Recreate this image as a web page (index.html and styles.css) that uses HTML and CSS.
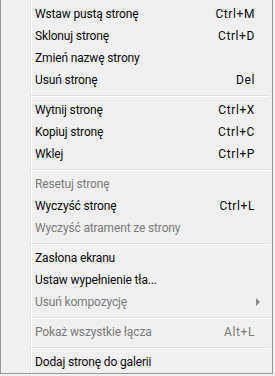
FILE: index.html
```html
<!doctype html>
<html lang="pl">
  <head>
    <meta charset="UTF-8" />
    <title>Menu strony</title>
    <link rel="stylesheet" href="styles.css">
  </head>
  <body>
    <div class="menu">
      <ul class="menu-list">
        <li class="menu-item"><span class="label">Wstaw pustą stronę</span><span class="key">Ctrl+M</span></li>
        <li class="menu-item"><span class="label">Sklonuj stronę</span><span class="key">Ctrl+D</span></li>
        <li class="menu-item"><span class="label">Zmień nazwę strony</span></li>
        <li class="menu-item"><span class="label">Usuń stronę</span><span class="key">Del</span></li>
        <li class="separator"></li>
        <li class="menu-item"><span class="label">Wytnij stronę</span><span class="key">Ctrl+X</span></li>
        <li class="menu-item"><span class="label">Kopiuj stronę</span><span class="key">Ctrl+C</span></li>
        <li class="menu-item"><span class="label">Wklej</span><span class="key">Ctrl+P</span></li>
        <li class="separator"></li>
        <li class="menu-item disabled"><span class="label">Resetuj stronę</span></li>
        <li class="menu-item"><span class="label">Wyczyść stronę</span><span class="key">Ctrl+L</span></li>
        <li class="menu-item disabled"><span class="label">Wyczyść atrament ze strony</span></li>
        <li class="separator"></li>
        <li class="menu-item"><span class="label">Zasłona ekranu</span></li>
        <li class="menu-item"><span class="label">Ustaw wypełnienie tła...</span></li>
        <li class="menu-item disabled has-sub"><span class="label">Usuń kompozycję</span><span class="arrow"></span></li>
        <li class="separator"></li>
        <li class="menu-item disabled"><span class="label">Pokaż wszystkie łącza</span><span class="key">Alt+L</span></li>
        <li class="separator"></li>
        <li class="menu-item"><span class="label">Dodaj stronę do galerii</span></li>
      </ul>
    </div>
  </body>
</html>
```

FILE: styles.css
```css
body {
  margin: 0;
  background: #efefef;
  font-family: Roboto, 'Open Sans', sans-serif;
  font-size: 12px;
  color: #0a0a0a;
}

.menu {
  width: 271px;
  border: 1px solid #979797;
  border-top: none;
  background:
    linear-gradient(to right, transparent 29px, #e2e3e3 29px, #e2e3e3 30px, #fff 30px, #fff 31px, transparent 31px),
    #f0f0f0;
  padding: 3px 0 0 0;
}

.menu-list {
  list-style: none;
  margin: 0;
  padding: 0;
}

.menu-item {
  display: flex;
  align-items: center;
  height: 22px;
  padding: 0 18px 0 34px;
  white-space: nowrap;
}

.menu-item .label {
  flex: 1;
  letter-spacing: -0.15px;
}

.menu-item .key {
  text-align: right;
  letter-spacing: 0.6px;
  margin-right: -1px;
}

.menu-item.disabled {
  color: #7b7b7b;
}

.arrow {
  width: 0;
  height: 0;
  margin-right: -6px;
  border-top: 4px solid transparent;
  border-bottom: 4px solid transparent;
  border-left: 4px solid #8a8a8a;
}

.separator {
  height: 8px;
  margin: 0 2px 0 30px;
  background: linear-gradient(to bottom, transparent 4px, #e0e0e0 4px, #e0e0e0 5px, #fff 5px, #fff 6px, transparent 6px);
}
```
